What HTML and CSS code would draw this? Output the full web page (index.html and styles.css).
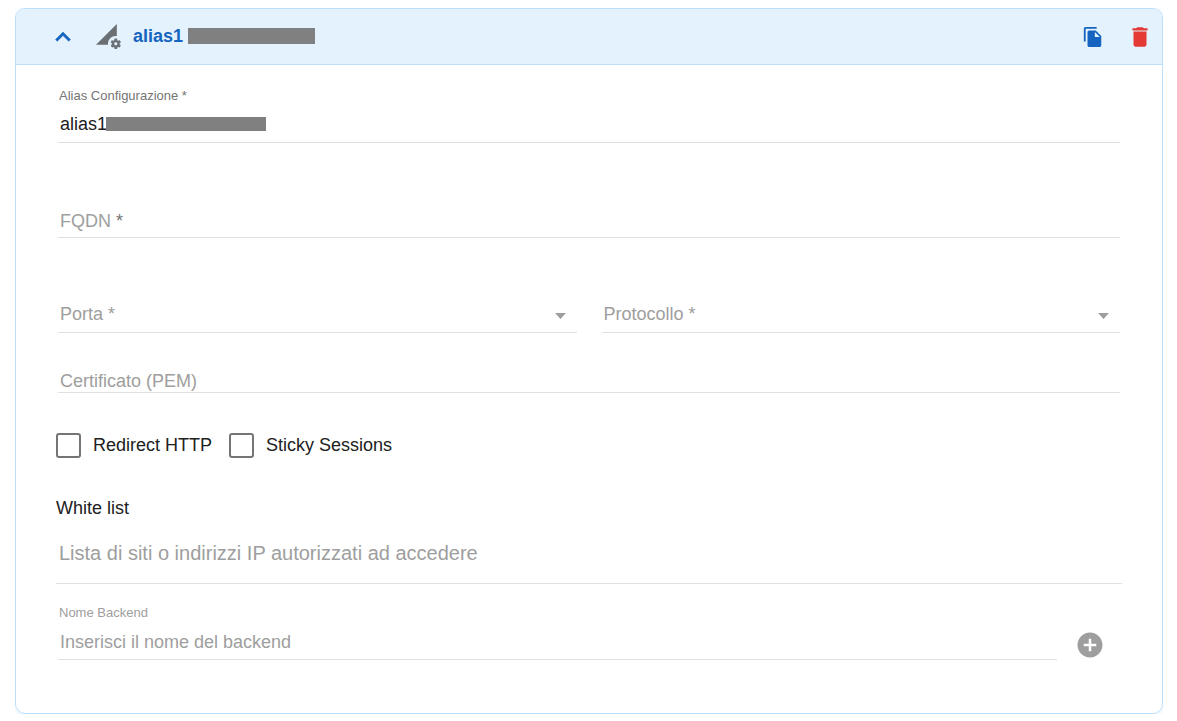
FILE: index.html
```html
<!DOCTYPE html>
<html lang="it">
<head>
<title>Configurazione alias</title>
<meta charset="utf-8">
<meta name="viewport" content="width=device-width, initial-scale=1.0">
<link rel="stylesheet" href="styles.css">
</head>
<body>

<form class="panel">
<header class="panel-header">
<button type="button" class="icon-button toggle" aria-label="Comprimi">
<svg width="30" height="30" viewBox="0 0 24 24"><path d="M12 8l-6 6 1.41 1.41L12 10.83l4.59 4.58L18 14z"/></svg>
</button>
<svg class="setting-icon" width="25" height="25" viewBox="0 0 24 24"><path d="M18.99 11.5c.34 0 .67.03 1 .07L20 0 0 20h11.56c-.04-.33-.07-.66-.07-1 0-4.14 3.36-7.5 7.5-7.5zm3.71 7.99c.02-.16.04-.32.04-.49 0-.17-.01-.33-.04-.49l1.06-.83c.09-.08.12-.21.06-.32l-1-1.73c-.06-.11-.19-.15-.31-.11l-1.24.5c-.26-.2-.54-.37-.85-.49l-.19-1.32c-.01-.12-.12-.21-.24-.21h-2c-.12 0-.23.09-.25.21l-.19 1.32c-.3.13-.59.29-.85.49l-1.24-.5c-.11-.04-.24 0-.31.11l-1 1.73c-.06.11-.04.24.06.32l1.06.83c-.02.16-.03.32-.03.49 0 .17.01.33.03.49l-1.06.83c-.09.08-.12.21-.06.32l1 1.73c.06.11.19.15.31.11l1.24-.5c.26.2.54.37.85.49l.19 1.32c.02.12.12.21.25.21h2c.12 0 .23-.09.25-.21l.19-1.32c.3-.13.59-.29.84-.49l1.25.5c.11.04.24 0 .31-.11l1-1.73c.06-.11.03-.24-.06-.32l-1.07-.83zm-3.71 1.01c-.83 0-1.5-.67-1.5-1.5s.67-1.5 1.5-1.5 1.5.67 1.5 1.5-.67 1.5-1.5 1.5z"/></svg>
<h1 class="title">alias1</h1>
<span class="mask mask-title"></span>
<div class="actions">
<button type="button" class="icon-button copy" aria-label="Duplica">
<svg width="22" height="22" viewBox="0 0 24 24"><path d="M16 1H4c-1.1 0-2 .9-2 2v14h2V3h12V1zm-1 4l6 6v10c0 1.1-.9 2-2 2H7.99C6.89 23 6 22.1 6 21l.01-14c0-1.1.89-2 1.99-2h7zm-1 7h5.5L14 6.5V12z"/></svg>
</button>
<button type="button" class="icon-button delete" aria-label="Elimina">
<svg width="26" height="26" viewBox="0 0 24 24"><path d="M6 19c0 1.1.9 2 2 2h8c1.1 0 2-.9 2-2V7H6v12zM19 4h-3.5l-1-1h-5l-1 1H5v2h14V4z"/></svg>
</button>
</div>
</header>

<div class="panel-body">
<div class="field">
<label class="small-label strong" for="alias">Alias Configurazione *</label>
<div class="line alias-line">
<input class="alias-input" type="text" id="alias" value="alias1">
<span class="mask mask-field"></span>
</div>
</div>

<div class="field line fqdn-line">
<label class="inline-label" for="fqdn">FQDN <span class="required">*</span></label>
<input type="text" id="fqdn">
</div>

<div class="field columns">
<div class="line select-line">
<select id="porta" aria-label="Porta"><option>Porta *</option></select>
<svg class="arrow" width="11" height="6" viewBox="0 0 11 6"><path d="M0 0h11L5.5 6z"/></svg>
</div>
<div class="line select-line">
<select id="protocollo" aria-label="Protocollo"><option>Protocollo *</option></select>
<svg class="arrow" width="11" height="6" viewBox="0 0 11 6"><path d="M0 0h11L5.5 6z"/></svg>
</div>
</div>

<div class="field line cert-line">
<input type="text" id="cert" placeholder="Certificato (PEM)" aria-label="Certificato (PEM)">
</div>

<div class="checks">
<label class="check"><input type="checkbox" class="box"> Redirect HTTP</label>
<label class="check"><input type="checkbox" class="box"> Sticky Sessions</label>
</div>

<label class="section-label" for="whitelist">White list</label>
<div class="line whitelist-line">
<input type="text" id="whitelist" placeholder="Lista di siti o indirizzi IP autorizzati ad accedere">
</div>

<div class="field backend">
<div class="backend-field">
<label class="small-label" for="backend">Nome Backend</label>
<div class="line backend-line">
<input type="text" id="backend" placeholder="Inserisci il nome del backend">
</div>
</div>
<button type="button" class="icon-button add" aria-label="Aggiungi backend">
<svg width="30" height="30" viewBox="0 0 24 24"><path d="M12 2C6.48 2 2 6.48 2 12s4.48 10 10 10 10-4.48 10-10S17.52 2 12 2zm5 11h-4v4h-2v-4H7v-2h4V7h2v4h4v2z"/></svg>
</button>
</div>
</div>
</form>

</body>
</html>
```
FILE: styles.css
```css
* {
    box-sizing: border-box;
}

body {
    margin: 8px 14px 7px 15px;
    background-color: #fff;
    color: #212121;
    font-family: "Liberation Sans", Arial, sans-serif;
    font-size: 18px;
}

svg {
    display: block;
    fill: currentColor;
}

.panel {
    border: 1px solid #bbdefb;
    border-radius: 10px;
    box-shadow: 0 2px 8px rgba(33, 150, 243, 0.12);
}

.panel-header {
    display: flex;
    align-items: center;
    height: 56px;
    padding: 0 9px 0 32px;
    background-color: #e3f2fd;
    border-bottom: 1px solid #bbdefb;
    border-radius: 9px 9px 0 0;
}

.icon-button {
    padding: 0;
    border: 0;
    background: none;
    cursor: pointer;
}

.toggle, .copy, .title {
    color: #1565c0;
}

.toggle svg {
    stroke: currentColor;
    stroke-width: 0.4;
}

.delete {
    color: #e53935;
}

.setting-icon {
    margin: 0 12px 0 18px;
    color: #6b7075;
}

.title {
    margin: 0 5px 0 0;
    font-size: 18px;
    font-weight: bold;
    line-height: 23px;
}

.actions {
    display: flex;
    align-items: center;
    gap: 23px;
    margin-left: auto;
}

.mask {
    background-color: #808080;
}

.mask-title {
    width: 127px;
    height: 16px;
    margin-bottom: 1px;
}

.mask-field {
    width: 160px;
    height: 14px;
}

.panel-body {
    padding: 22px 40px 53px;
}

.field {
    margin: 0 2px;
}

.small-label {
    display: block;
    padding-left: 1px;
    font-size: 13px;
    line-height: 18px;
    color: #9e9e9e;
}

.small-label.strong, .required {
    color: #757575;
}

.line {
    display: flex;
    align-items: center;
    border-bottom: 1px solid #e0e0e0;
}

.line input, .line select {
    flex: 1;
    min-width: 0;
    height: 100%;
    margin: 0;
    padding: 0 0 0 2px;
    border: 0;
    outline: 0;
    border-radius: 0;
    background: none;
    color: inherit;
    font: inherit;
}

.line input::placeholder {
    color: #9e9e9e;
    opacity: 1;
}

.alias-line {
    height: 37px;
    margin-top: 1px;
}

.line .alias-input {
    flex: none;
    width: 48px;
}

.fqdn-line {
    height: 33px;
    margin-top: 62px;
}

.inline-label {
    padding-left: 2px;
    color: #9e9e9e;
}

.columns {
    display: grid;
    grid-template-columns: 1fr 1fr;
    gap: 25px;
    margin-top: 58px;
}

/* select and arrow share one grid cell */
.select-line {
    display: grid;
    height: 37px;
    color: #9e9e9e;
}

.select-line select, .arrow {
    grid-area: 1 / 1;
}

.line select {
    appearance: none;
}

.arrow {
    justify-self: end;
    margin: 4px 11px 0 0;
    pointer-events: none;
}

.cert-line {
    height: 23px;
    margin-top: 37px;
}

.checks {
    display: flex;
    gap: 17px;
    margin-top: 40px;
}

.check {
    display: flex;
    align-items: center;
    gap: 12px;
}

.box {
    appearance: none;
    width: 25px;
    height: 25px;
    margin: 0;
    border: 2px solid #757575;
    border-radius: 3px;
}

.box:checked {
    background-color: #1565c0;
}

.section-label {
    display: block;
    margin-top: 38px;
    line-height: 24px;
}

.whitelist-line {
    height: 61px;
    margin-top: 3px;
    padding-left: 1px;
    font-size: 20px;
}

.backend {
    display: flex;
    align-items: flex-end;
    gap: 18px;
    margin-top: 20px;
    padding-right: 15px;
}

.backend-field {
    flex: 1;
}

.backend-line {
    height: 35px;
    margin-top: 3px;
}

.add {
    color: #9e9e9e;
}
```
